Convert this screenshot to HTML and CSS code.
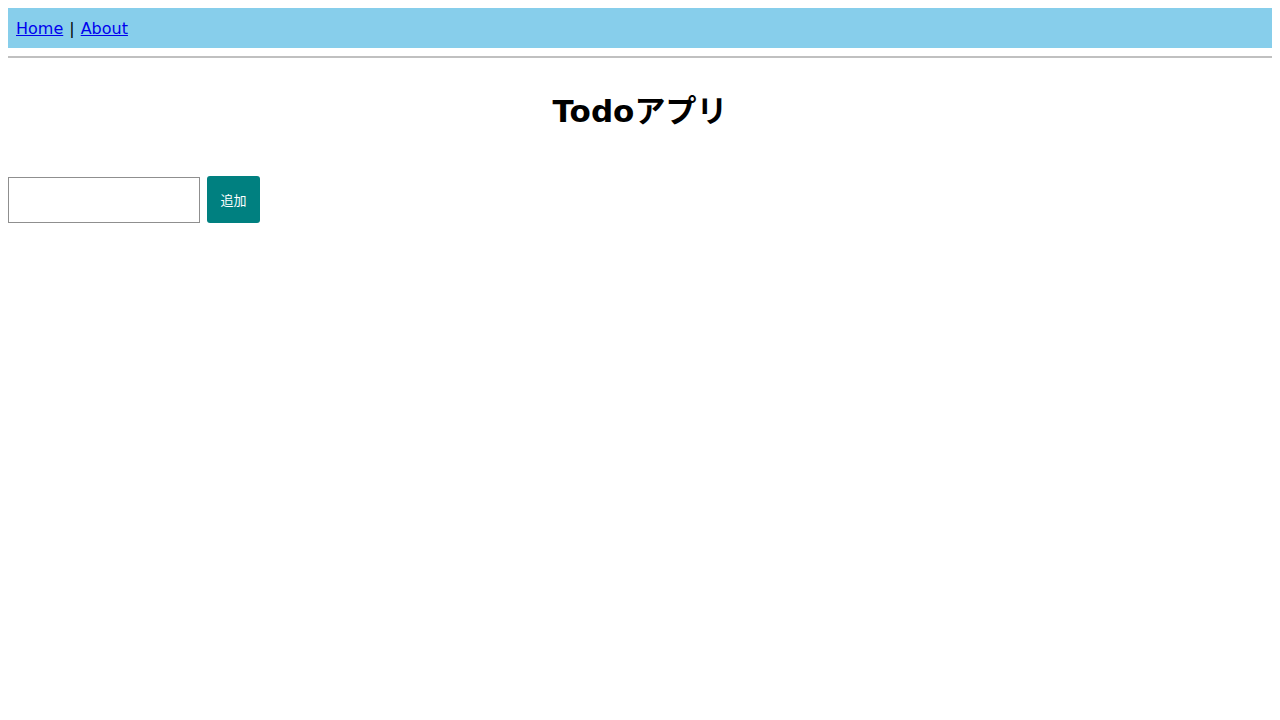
FILE: index.html
```html
<!DOCTYPE html>
<html lang="ja">
<head>
<meta charset="utf-8">
<title>Todoアプリ</title>
<link rel="stylesheet" href="styles.css">
</head>
<body>
<nav class="nav">
  <a href="#" class="nav-link">Home</a><span class="sep">|</span><a href="#" class="nav-link">About</a>
</nav>
<hr class="rule">
<h1 class="title">Todoアプリ</h1>
<form class="todo-form">
  <input type="text" class="todo-input">
  <button type="button" class="add-btn">追加</button>
</form>
</body>
</html>
```
FILE: styles.css
```css
body {
  margin: 8px;
  font-family: "DejaVu Sans", "Noto Sans CJK JP", sans-serif;
  font-size: 16px;
  color: #000;
  background: #fff;
}
.nav {
  background: #87ceeb;
  height: 40px;
  padding: 0 8px;
  display: flex;
  align-items: center;
}
.nav-link {
  color: #0000ee;
}
.sep {
  margin: 0 6px;
}
.rule {
  margin: 8px 0 0;
  border: none;
  border-top: 2px solid #c0c0c0;
}
.title {
  text-align: center;
  font-size: 31px;
  font-weight: bold;
  margin: 22px 0 34px;
  line-height: 62px;
}
.todo-form {
  display: flex;
  align-items: center;
  gap: 7px;
  margin-top: 0;
}
.todo-input {
  width: 192px;
  height: 46px;
  box-sizing: border-box;
  border: 1px solid #8f8f8f;
  margin: 0;
  padding: 0 4px;
}
.add-btn {
  height: 47px;
  width: 53px;
  background: #008080;
  color: #fff;
  border: none;
  border-radius: 3px;
  font-family: "Noto Sans CJK JP", sans-serif;
  font-size: 13px;
  padding: 0;
}
```
